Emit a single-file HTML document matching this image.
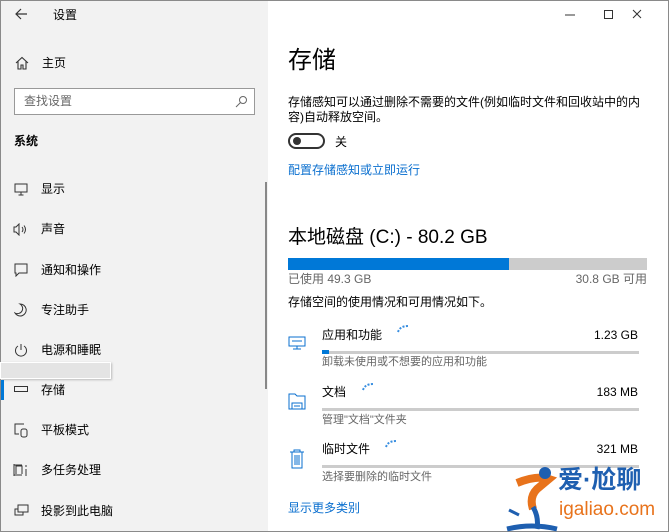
<!DOCTYPE html>
<html><head><meta charset="utf-8"><style>
*{margin:0;padding:0;box-sizing:border-box}
body{width:669px;height:532px;overflow:hidden;font-family:"Liberation Sans","Noto Sans CJK SC",sans-serif;color:#000;background:#fff;position:relative}
.win{position:absolute;left:0;top:0;width:669px;height:532px;border:1px solid #8a8a8a;}
.left{position:absolute;left:1px;top:1px;width:267px;height:530px;background:#f2f2f2}
.t{position:absolute;white-space:nowrap;font-size:12px;line-height:14px}
.ic{position:absolute}
.bar{position:absolute;background:#ccc}
.blue{color:#0a6fcf}
.g{color:#666}
</style></head><body>
<div class="win"></div>
<div class="left">
<svg class="ic" style="left:13px;top:7px" width="14" height="12"><path d="M13 6H2M7 1L2 6l5 5" stroke="#333" fill="none" stroke-width="1.2"/></svg>
<div class="t" style="left:52px;top:7px">设置</div>
<svg class="ic" style="left:14px;top:55px" width="14" height="14"><path d="M1 7L7 1.5 13 7M3 5.5V13h3V9h2v4h3V5.5" stroke="#333" fill="none" stroke-width="1.1"/></svg>
<div class="t" style="left:41px;top:55px">主页</div>
<div style="position:absolute;left:13px;top:87px;width:241px;height:27px;border:1px solid #999;background:#fff"></div>
<div class="t g" style="left:23px;top:93px">查找设置</div>
<svg class="ic" style="left:234px;top:94px" width="13" height="13"><circle cx="8" cy="5" r="3.5" stroke="#666" fill="none"/><path d="M5.5 7.5L1 12" stroke="#666"/></svg>
<div class="t" style="left:13px;top:133px;font-weight:bold">系统</div>
<svg class="ic" style="left:13px;top:182px" width="14" height="13"><rect x="1" y="1" width="12" height="8" stroke="#333" fill="none"/><path d="M7 9v3M4.5 12h5" stroke="#333"/></svg>
<div class="t" style="left:40px;top:181px">显示</div>
<svg class="ic" style="left:12px;top:222px" width="16" height="13"><path d="M1 4h2l3-3v11L3 9H1z" stroke="#333" fill="none"/><path d="M9 4q2 2.5 0 5M11 2.5q3 4 0 8" stroke="#333" fill="none"/></svg>
<div class="t" style="left:40px;top:221px">声音</div>
<svg class="ic" style="left:13px;top:262px" width="14" height="14"><path d="M1 1h12v9H5l-3 3v-3H1z" stroke="#333" fill="none"/></svg>
<div class="t" style="left:40px;top:262px">通知和操作</div>
<svg class="ic" style="left:13px;top:302px" width="14" height="14"><path d="M6 1a6 6 0 1 1-5 9a5 5 0 0 0 5-9z" stroke="#333" fill="none"/></svg>
<div class="t" style="left:40px;top:302px">专注助手</div>
<svg class="ic" style="left:13px;top:342px" width="14" height="14"><path d="M4 3a5.5 5.5 0 1 0 6 0M7 1v6" stroke="#333" fill="none"/></svg>
<div class="t" style="left:40px;top:342px">电源和睡眠</div>
<div style="position:absolute;left:-1px;top:361px;width:111px;height:17px;background:#e4e4e4;border:1px solid #fff;box-shadow:1px 1px 2px #bbb"></div>
<div style="position:absolute;left:0;top:379px;width:3px;height:20px;background:#0078d7"></div>
<svg class="ic" style="left:13px;top:385px" width="15" height="8"><rect x="0.5" y="0.5" width="13" height="5" stroke="#333" fill="none"/></svg>
<div class="t" style="left:40px;top:382px">存储</div>
<svg class="ic" style="left:13px;top:422px" width="15" height="15"><path d="M10 1H1v10h4" stroke="#333" fill="none"/><rect x="7" y="6" width="6" height="8" rx="2" stroke="#333" fill="none"/></svg>
<div class="t" style="left:40px;top:422px">平板模式</div>
<svg class="ic" style="left:12px;top:462px" width="15" height="14"><path d="M1 1v12M1 2h8M1 12h8M3 11V3h6v8M13 2v2M13 6v7" stroke="#333" fill="none"/></svg>
<div class="t" style="left:40px;top:462px">多任务处理</div>
<svg class="ic" style="left:13px;top:503px" width="15" height="13"><rect x="4" y="1" width="10" height="7" stroke="#333" fill="none"/><path d="M4 5H1v6h8V8" stroke="#333" fill="none"/></svg>
<div class="t" style="left:40px;top:503px">投影到此电脑</div>
<div style="position:absolute;left:264px;top:181px;width:2px;height:207px;background:#888"></div>
</div>
<svg class="ic" style="left:565px;top:9px" width="80" height="12"><path d="M0 6h10" stroke="#333"/><rect x="39.5" y="1.5" width="8" height="8" stroke="#333" fill="none"/><path d="M76 1l-8 8M68 1l8 8" stroke="#333"/></svg>
<div class="t" style="left:288px;top:46px;font-size:24px;line-height:30px">存储</div>
<div class="t" style="left:288px;top:95px;line-height:15px;white-space:normal;width:380px">存储感知可以通过删除不需要的文件(例如临时文件和回收站中的内<br>容)自动释放空间。</div>
<div style="position:absolute;left:288px;top:133px;width:37px;height:16px;border:2px solid #333;border-radius:8px"></div>
<div style="position:absolute;left:293px;top:137px;width:8px;height:8px;border-radius:50%;background:#333"></div>
<div class="t" style="left:335px;top:135px">关</div>
<div class="t blue" style="left:288px;top:163px">配置存储感知或立即运行</div>
<div class="t" style="left:288px;top:226px;font-size:19px;line-height:23px">本地磁盘 (C:) - 80.2 GB</div>
<div class="bar" style="left:288px;top:258px;width:359px;height:12px"></div>
<div style="position:absolute;left:288px;top:258px;width:221px;height:12px;background:#0078d7"></div>
<div class="t g" style="left:288px;top:272px">已使用 49.3 GB</div>
<div class="t g" style="right:22px;top:272px">30.8 GB 可用</div>
<div class="t" style="left:288px;top:295px">存储空间的使用情况和可用情况如下。</div>

<svg class="ic" style="left:288px;top:336px" width="18" height="14"><rect x="1" y="1" width="16" height="9" stroke="#0a6fcf" fill="none"/><path d="M4 5h10M9 10v3M5 13h8" stroke="#0a6fcf"/></svg>
<div class="t" style="left:322px;top:328px">应用和功能</div>
<svg class="ic" style="left:396px;top:324px" width="14" height="10"><path d="M2 8q2-6 10-6" stroke="#3a8fe0" stroke-width="2" stroke-dasharray="2 1.5" fill="none"/></svg>
<div class="t" style="right:31px;top:328px">1.23 GB</div>
<div class="bar" style="left:322px;top:351px;width:317px;height:3px"></div>
<div style="position:absolute;left:322px;top:350px;width:7px;height:4px;background:#0078d7"></div>
<div class="t g" style="left:322px;top:355px;font-size:11px">卸载未使用或不想要的应用和功能</div>

<svg class="ic" style="left:288px;top:392px" width="18" height="18"><path d="M1 2h6l2 2h8v13H1z" stroke="#0a6fcf" fill="none"/><path d="M4 17v-6h10v6M6 14h6" stroke="#0a6fcf" fill="none"/></svg>
<div class="t" style="left:322px;top:385px">文档</div>
<svg class="ic" style="left:361px;top:382px" width="14" height="10"><path d="M2 8q2-6 10-6" stroke="#3a8fe0" stroke-width="2" stroke-dasharray="2 1.5" fill="none"/></svg>
<div class="t" style="right:31px;top:385px">183 MB</div>
<div class="bar" style="left:322px;top:408px;width:317px;height:3px"></div>
<div class="t g" style="left:322px;top:413px;font-size:11px">管理"文档"文件夹</div>

<svg class="ic" style="left:289px;top:449px" width="16" height="20"><path d="M1 3h14M5 3V1h6v2M3 3v16h10V3M6 6v10M8 6v10M10 6v10" stroke="#0a6fcf" fill="none"/></svg>
<div class="t" style="left:322px;top:442px">临时文件</div>
<svg class="ic" style="left:384px;top:439px" width="14" height="10"><path d="M2 8q2-6 10-6" stroke="#3a8fe0" stroke-width="2" stroke-dasharray="2 1.5" fill="none"/></svg>
<div class="t" style="right:31px;top:442px">321 MB</div>
<div class="bar" style="left:322px;top:465px;width:317px;height:3px"></div>
<div class="t g" style="left:322px;top:470px;font-size:11px">选择要删除的临时文件</div>

<div class="t blue" style="left:288px;top:501px">显示更多类别</div>
<svg class="ic" style="left:505px;top:465px" width="60" height="67"><path d="M12 18q20-8 32-4l-12 10q-8 8-4 20" stroke="#e8731c" stroke-width="8" fill="none"/><circle cx="40" cy="8" r="6" fill="#1e5fb0"/><path d="M28 42q6 10 4 22M2 64q25-6 50 0" stroke="#1e5fb0" stroke-width="5" fill="none"/><path d="M4 45l10 5" stroke="#1e5fb0" stroke-width="3"/></svg>
<div class="t" style="left:558px;top:466px;font-size:25px;line-height:28px;color:#1e5fb0;font-weight:bold">爱·尬聊</div>
<div class="t" style="left:559px;top:499px;font-size:19px;line-height:22px;color:#e8731c">igaliao.com</div>
</body></html>
